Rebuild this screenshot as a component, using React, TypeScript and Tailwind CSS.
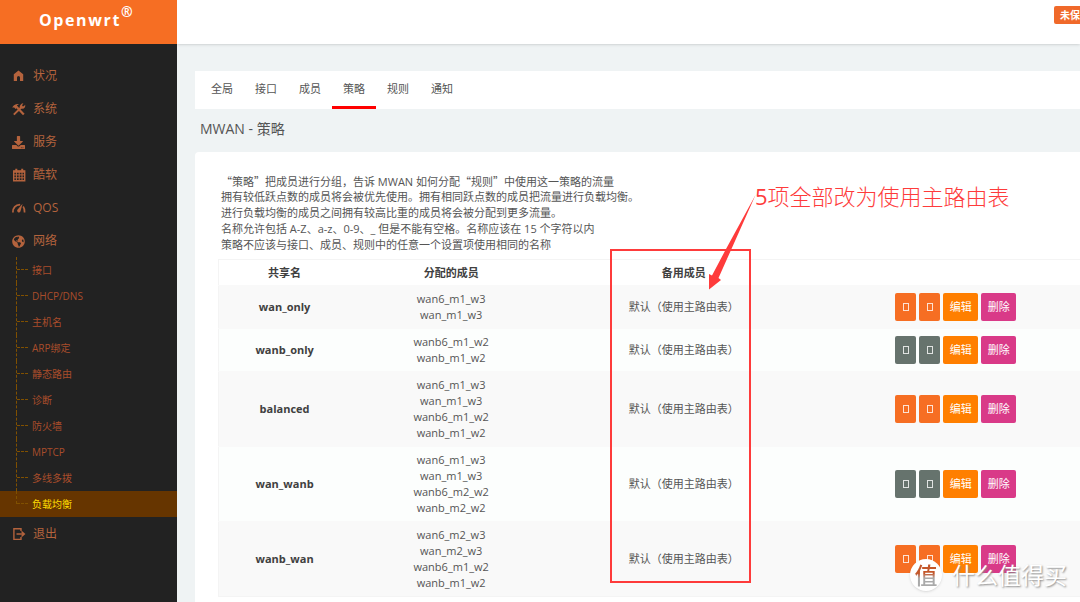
import type { ReactNode } from 'react';
import { FaDownload, FaGlobeAmericas } from 'react-icons/fa';
import clsx from 'clsx';

type MenuItem = {
  label: string;
  icon: ReactNode;
};

type Policy = {
  name: string;
  members: string[];
  sortable: boolean;
};

const policies: Policy[] = [
  { name: 'wan_only', members: ['wan6_m1_w3', 'wan_m1_w3'], sortable: true },
  { name: 'wanb_only', members: ['wanb6_m1_w2', 'wanb_m1_w2'], sortable: false },
  {
    name: 'balanced',
    members: ['wan6_m1_w3', 'wan_m1_w3', 'wanb6_m1_w2', 'wanb_m1_w2'],
    sortable: true,
  },
  {
    name: 'wan_wanb',
    members: ['wan6_m1_w3', 'wan_m1_w3', 'wanb6_m2_w2', 'wanb_m2_w2'],
    sortable: false,
  },
  {
    name: 'wanb_wan',
    members: ['wan6_m2_w3', 'wan_m2_w3', 'wanb6_m1_w2', 'wanb_m1_w2'],
    sortable: true,
  },
];

const tabs = ['全局', '接口', '成员', '策略', '规则', '通知'];

const networkItems = [
  '接口',
  'DHCP/DNS',
  '主机名',
  'ARP绑定',
  '静态路由',
  '诊断',
  '防火墙',
  'MPTCP',
  '多线多拨',
  '负载均衡',
];

const description = [
  '“策略”把成员进行分组，告诉 MWAN 如何分配“规则”中使用这一策略的流量',
  '拥有较低跃点数的成员将会被优先使用。拥有相同跃点数的成员把流量进行负载均衡。',
  '进行负载均衡的成员之间拥有较高比重的成员将会被分配到更多流量。',
  '名称允许包括 A-Z、a-z、0-9、_ 但是不能有空格。名称应该在 15 个字符以内',
  '策略不应该与接口、成员、规则中的任意一个设置项使用相同的名称',
];

function HomeIcon() {
  return (
    <svg viewBox="0 0 14 14" className="size-3.5" fill="currentColor">
      <path d="M6.500 1.500 1.800 5.200V12h3.200V8.500a1.500 1.500 0 0 1 3 0V12h3.200V5.200z" />
    </svg>
  );
}

function ToolsIcon() {
  return (
    <svg viewBox="0 0 14 14" className="size-3.5" fill="none" stroke="currentColor">
      <path d="M4.500 4.700 11.800 12.600" strokeWidth="2.200" />
      <path d="M1.800 12.600 9.600 5" strokeWidth="2" />
      <path d="M.2 5.400C1.600 3 3.600 1.600 7 2L4.900 3.600l.7 1.600-2 1.800-1.400-1.600z" fill="currentColor" stroke="none" />
      <path d="M11.400 1.200 10.100 3.200l.5 1 1.100.1 1.500-1.600c.4 2.200-.7 3.900-2.700 4L9 6.600 7.600 5.200C7.800 3 9.300 1.200 11.400 1.200z" fill="currentColor" stroke="none" />
    </svg>
  );
}

function CalendarIcon() {
  return (
    <svg viewBox="0 0 14 14" className="size-3.5" fill="none" stroke="currentColor">
      <path d="M1.700 3h11v9.800h-11z" strokeWidth="1.400" />
      <path d="M1.500 3.700h11.500M4.300 .8v2.500M10.200 .8v2.500" strokeWidth="2" />
      <path d="M4.400 4v8.500M7.200 4v8.500M10 4v8.500M1.500 6.900h11.500M1.500 9.800h11.500" strokeWidth="1" />
    </svg>
  );
}

function GaugeIcon() {
  return (
    <svg viewBox="0 0 14 14" className="size-3.5" fill="none" stroke="currentColor">
      <path d="M.9 11.500C.9 7 3.500 4 8.200 3.700M11.200 5.400c1 1.300 1.400 3.500 1.400 6" strokeWidth="1.700" />
      <path d="M10.600 2.800 8.400 10.600a1.700 1.700 0 1 1-3-1.800z" fill="currentColor" stroke="none" />
    </svg>
  );
}

function ExitIcon() {
  return (
    <svg viewBox="0 0 14 14" className="size-3.5" fill="none" stroke="currentColor">
      <path d="M9 4V1.800H1.900v10.600H9V10" strokeWidth="1.400" />
      <path d="M4.500 7h7.600M9.500 4.500 12.300 7 9.500 9.500" strokeWidth="1.500" />
    </svg>
  );
}

const menu: MenuItem[] = [
  { label: '状况', icon: <HomeIcon /> },
  { label: '系统', icon: <ToolsIcon /> },
  { label: '服务', icon: <FaDownload className="size-[13px]" /> },
  { label: '酷软', icon: <CalendarIcon /> },
  { label: 'QOS', icon: <GaugeIcon /> },
  { label: '网络', icon: <FaGlobeAmericas className="size-[13px]" /> },
];

function MenuLink({ label, icon }: MenuItem) {
  return (
    <a href="#" className="flex h-8 items-center pl-3 text-xs text-[#b4633d]">
      <span className="mr-[7px] flex w-3.5">{icon}</span>
      {label}
    </a>
  );
}

function Sidebar() {
  return (
    <aside className="w-[177px] shrink-0 bg-[#222]">
      <a
        href="#"
        className="flex h-11 items-start bg-[#f66e23] pt-2 pl-[39px] text-base leading-6 font-bold tracking-widest text-white"
      >
        Openwrt
        <span className="-mt-2 text-sm leading-6">®</span>
      </a>
      <nav className="pt-4">
        <ul className="flex flex-col gap-px">
          {menu.map((item) => (
            <li key={item.label}>
              <MenuLink {...item} />
            </li>
          ))}
        </ul>
        <ul className="mb-px">
          {networkItems.map((label, i) => {
            const last = i === networkItems.length - 1;
            return (
              <li key={label}>
                <a
                  href="#"
                  className={clsx(
                    'flex h-[26px] pl-4 text-[10px] leading-[26px]',
                    last ? 'bg-[#663500] text-[#ffdc00]' : 'text-[#a94d2b]',
                  )}
                >
                  <span
                    className={clsx(
                      'mr-1 w-3 border-l border-dashed border-[#805000]',
                      last && 'h-[13px]',
                    )}
                  >
                    <span className="block h-[13px] border-b border-dashed border-[#805000]" />
                  </span>
                  {label}
                </a>
              </li>
            );
          })}
        </ul>
        <MenuLink label="退出" icon={<ExitIcon />} />
      </nav>
    </aside>
  );
}

function SortButton({ label, active }: { label: string; active: boolean }) {
  return (
    <button
      aria-label={label}
      className={clsx(
        'flex h-7 w-[21px] items-center justify-center rounded-xs',
        active ? 'bg-[#f66e23]' : 'bg-[#66736d]',
      )}
    >
      <span className="h-2 w-1.5 border border-white/80" />
    </button>
  );
}

function PolicyRow({ policy }: { policy: Policy }) {
  return (
    <tr className="border-t border-[#f9f9f9] odd:bg-[#f9f9f9] even:bg-[#fcfefd]">
      <th scope="row" className="text-[#404040]">
        {policy.name}
      </th>
      <td className="py-[5px]">
        {policy.members.map((member) => (
          <div key={member}>{member}</div>
        ))}
      </td>
      <td>默认（使用主路由表）</td>
      <td>
        <div className="flex justify-center gap-[3px] text-white">
          <SortButton label="上移" active={policy.sortable} />
          <SortButton label="下移" active={policy.sortable} />
          <button className="h-7 w-[35px] rounded-xs bg-[#ff7f00]">编辑</button>
          <button className="h-7 w-[35px] rounded-xs bg-[#d93a88]">删除</button>
        </div>
      </td>
    </tr>
  );
}

function PolicyTable() {
  return (
    <table className="mt-1.5 w-full table-fixed border border-[#f4f4f4] text-center text-[11px] leading-4">
      <colgroup>
        <col className="w-[15%]" />
        <col className="w-[23%]" />
        <col className="w-[30%]" />
        <col className="w-[32%]" />
      </colgroup>
      <thead>
        <tr className="h-[26px] text-[#404040]">
          <th>共享名</th>
          <th>分配的成员</th>
          <th>备用成员</th>
          <td />
        </tr>
      </thead>
      <tbody>
        {policies.map((policy) => (
          <PolicyRow key={policy.name} policy={policy} />
        ))}
      </tbody>
    </table>
  );
}

// Quoted terms take the CJK face so that the quotes are full width
function DescriptionLine({ text }: { text: string }) {
  return (
    <p className="h-4">
      {text.split(/(“[^”]*”)/).map((part, i) =>
        part.startsWith('“') ? (
          <span key={i} className="font-['Noto_Sans_CJK_SC',sans-serif]">
            {part}
          </span>
        ) : (
          part
        ),
      )}
    </p>
  );
}

// Red frame, arrow and note drawn over the fallback column
function Annotation() {
  return (
    <div className="pointer-events-none absolute inset-0 text-[#fe3b3b]">
      <div className="absolute top-[249px] left-[433px] h-[334px] w-[141px] border-2 border-current" />
      <svg
        viewBox="0 0 50 98"
        className="absolute top-[192px] left-[530px] h-[98px] w-[50px]"
        fill="currentColor"
      >
        <path d="M48.500 3 24 58 11.500 86l2.500 2L2 97.500V82l3 1.500L19 57z" />
      </svg>
      <p className="absolute top-[182px] left-[578px] text-[22px] leading-7 font-light whitespace-nowrap">
        <span className="font-normal">5</span>
        项全部改为使用主路由表
      </p>
    </div>
  );
}

function Watermark() {
  return (
    <div className="pointer-events-none absolute top-[559px] left-[733px] flex items-center gap-2.5">
      <span className="flex size-8 items-center justify-center rounded-full bg-white shadow">
        <span className="bg-linear-to-b from-[#c4572a] from-45% to-[#aaa] to-60% bg-clip-text text-[23px] leading-8 font-medium text-transparent">
          值
        </span>
      </span>
      <span className="text-[23px] leading-8 whitespace-nowrap text-white [text-shadow:1px_1px_2px_#888]">
        什么值得买
      </span>
    </div>
  );
}

export default function App() {
  return (
    <div className="flex h-screen overflow-hidden bg-[#eff3f4] font-['Open_Sans','Noto_Sans_CJK_SC',sans-serif] text-[#555]">
      <Sidebar />
      <div className="relative min-w-0 flex-1 overflow-hidden">
        <header className="flex h-11 items-start justify-end bg-white pt-1.5 shadow">
          <a
            href="#"
            className="h-[18px] rounded-l-xs bg-[#f0692a] pl-1.5 text-[10px] leading-[18px] font-bold text-white"
          >
            未保
          </a>
        </header>

        <main className="min-w-[943px] pt-[27px] pl-[18px]">
          <nav className="flex bg-white pl-[5px] text-[11px]">
            {tabs.map((tab) => (
              <a
                key={tab}
                href="#"
                className={clsx(
                  'h-[38px] w-11 border-b-3 text-center leading-9',
                  tab === '策略' ? 'border-[#f00]' : 'border-transparent',
                )}
              >
                {tab}
              </a>
            ))}
          </nav>
          <h2 className="mt-2 pl-[5px] text-sm leading-6">MWAN - 策略</h2>
          <section className="mt-[11px] rounded bg-white px-[23px] pt-[21px] pb-6">
            <div className="pl-[3px] text-[11px] leading-4">
              {description.map((line) => (
                <DescriptionLine key={line} text={line} />
              ))}
            </div>
            <PolicyTable />
          </section>
        </main>

        <Annotation />
        <Watermark />
      </div>
    </div>
  );
}
